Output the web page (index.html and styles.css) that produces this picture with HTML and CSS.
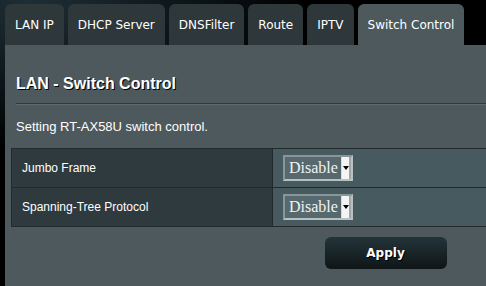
FILE: index.html
```html
<!DOCTYPE html>
<html>
<head>
<meta charset="utf-8">
<link rel="stylesheet" href="styles.css">
</head>
<body>
<div class="tabs">
  <div class="tab">LAN IP</div>
  <div class="tab">DHCP Server</div>
  <div class="tab">DNSFilter</div>
  <div class="tab">Route</div>
  <div class="tab">IPTV</div>
  <div class="tab active">Switch Control</div>
</div>
<div class="panel">
  <div class="content">
    <div class="title">LAN - Switch Control</div>
    <div class="divider"></div>
    <div class="desc">Setting RT-AX58U switch control.</div>
    <table class="form">
      <tr>
        <th>Jumbo Frame</th>
        <td><span class="select"><span class="select-value">Disable</span><span class="select-arrow"><svg width="6" height="4" viewBox="0 0 6 4"><path d="M0 0h6L3 4z" fill="#000"/></svg></span></span></td>
      </tr>
      <tr>
        <th>Spanning-Tree Protocol</th>
        <td><span class="select"><span class="select-value">Disable</span><span class="select-arrow"><svg width="6" height="4" viewBox="0 0 6 4"><path d="M0 0h6L3 4z" fill="#000"/></svg></span></span></td>
      </tr>
    </table>
    <div class="actions"><button class="apply">Apply</button></div>
  </div>
</div>
</body>
</html>
```
FILE: styles.css
```css
html, body {
  margin: 0;
  height: 100%;
}
body {
  overflow: hidden;
  background: radial-gradient(ellipse 280px 150px at 30px 0, #1f2e35 0%, #0c1619 55%, #000 100%) #000;
  font-family: "Liberation Sans", Arial, sans-serif;
  color: #fff;
}
.tabs {
  display: flex;
  gap: 4px;
  padding: 4px 0 0 5px;
  height: 41px;
}
.tab {
  display: flex;
  align-items: center;
  padding: 0 10px;
  background: #2e373a;
  border-radius: 6px 6px 0 0;
  font-family: "DejaVu Sans", Verdana, sans-serif;
  font-size: 12px;
  color: #fff;
  white-space: nowrap;
}
.tab.active {
  background: #4d595d;
}
.panel {
  margin-left: 5px;
  background: #4d595d;
  height: 241px;
  overflow: hidden;
}
.content {
  width: 749px;
  padding: 29px 0 0 6px;
}
.title {
  margin-left: 5px;
  font-size: 16px;
  line-height: 20px;
  font-weight: bold;
  text-shadow: 1px 1px 0 #000;
}
.divider {
  margin: 9px 0 0 5px;
  height: 0;
  border-top: 1px solid #2f3a3d;
  border-bottom: 1px solid #5d6b6f;
}
.desc {
  margin: 14px 0 0 5px;
  font-size: 13px;
  line-height: 16px;
}
.form {
  margin-top: 13px;
  width: 749px;
  border-collapse: collapse;
  border: 1px solid #222a2c;
}
.form th, .form td {
  border: 1px solid #222a2c;
  height: 38px;
  padding: 0;
}
.form th {
  width: 250px;
  padding-left: 10px;
  background: #2f3a3e;
  text-align: left;
  font-weight: normal;
  font-size: 12px;
}
.form td {
  background: #475a5f;
  padding-left: 10px;
}
.select {
  display: inline-flex;
  align-items: center;
  box-sizing: border-box;
  width: 70px;
  height: 26px;
  border: 2px solid;
  border-color: #88969a #b8c0c2 #b8c0c2 #88969a;
  background: #56696e;
  vertical-align: middle;
}
.select-value {
  flex: 1;
  padding-left: 4px;
  font-family: "Liberation Serif", "Times New Roman", serif;
  font-size: 16px;
  color: #f2f2f2;
  line-height: 22px;
}
.select-arrow {
  display: flex;
  align-items: center;
  justify-content: center;
  box-sizing: border-box;
  width: 10px;
  height: 22px;
  background: #f4f4f4;
  border-right: 2px solid #a0a6a8;
  border-left: 1px solid #d8dcdd;
}
.actions {
  display: flex;
  justify-content: center;
  margin-top: 10px;
}
.apply {
  width: 122px;
  height: 32px;
  border: 0;
  border-radius: 6px;
  background: linear-gradient(#233439 0%, #0f1517 100%);
  color: #fff;
  font-family: "DejaVu Sans", Verdana, sans-serif;
  font-weight: bold;
  font-size: 12px;
  text-shadow: 1px 1px 0 #000;
  padding: 0;
}
```
